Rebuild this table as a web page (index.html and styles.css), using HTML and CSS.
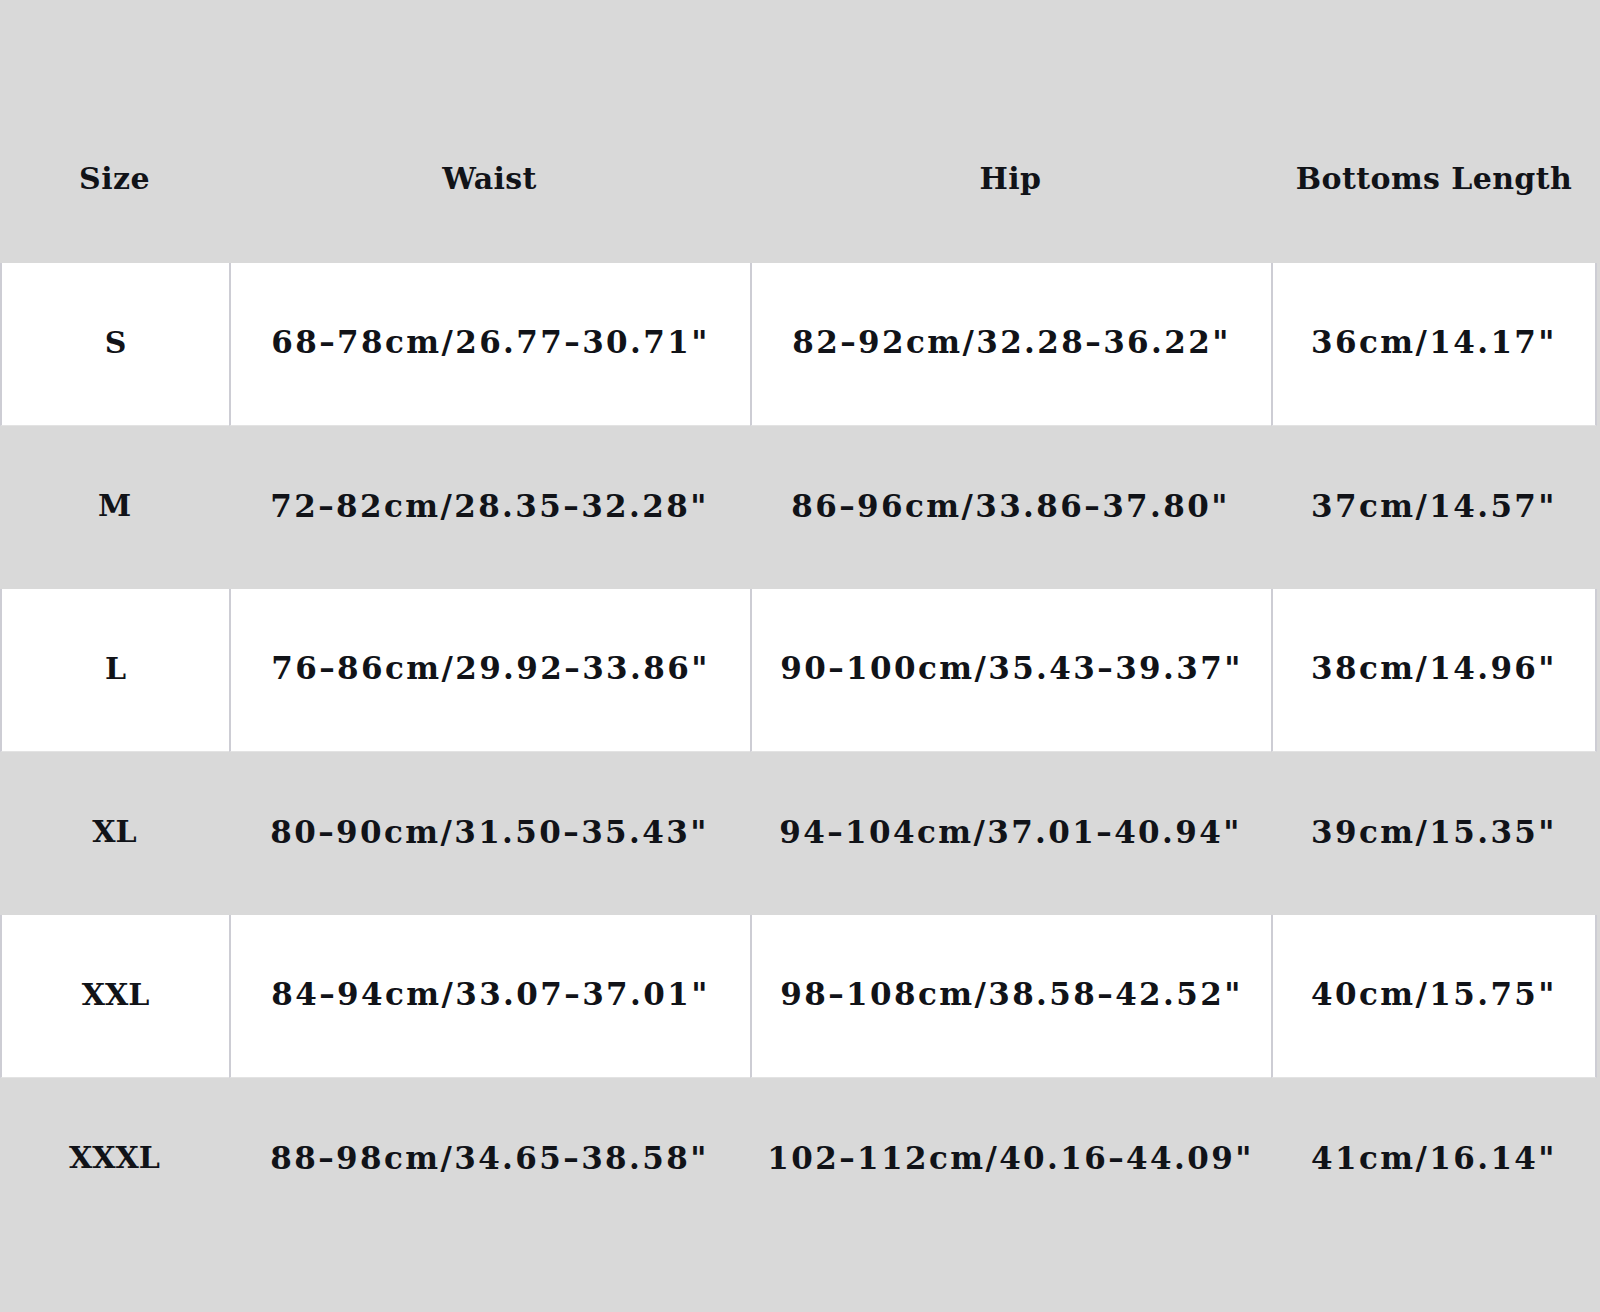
FILE: index.html
```html
<!DOCTYPE html>
<html lang="en">
<head>
<meta charset="utf-8">
<title>Size Chart</title>
<link rel="stylesheet" href="styles.css">
</head>
<body>
<div class="chart">
  <div class="row head">
    <div class="cell">Size</div>
    <div class="cell">Waist</div>
    <div class="cell">Hip</div>
    <div class="cell">Bottoms Length</div>
  </div>
  <div class="row light">
    <div class="cell size">S</div>
    <div class="cell">68–78cm/26.77–30.71"</div>
    <div class="cell">82–92cm/32.28–36.22"</div>
    <div class="cell">36cm/14.17"</div>
  </div>
  <div class="row dark">
    <div class="cell size">M</div>
    <div class="cell">72–82cm/28.35–32.28"</div>
    <div class="cell">86–96cm/33.86–37.80"</div>
    <div class="cell">37cm/14.57"</div>
  </div>
  <div class="row light">
    <div class="cell size">L</div>
    <div class="cell">76–86cm/29.92–33.86"</div>
    <div class="cell">90–100cm/35.43–39.37"</div>
    <div class="cell">38cm/14.96"</div>
  </div>
  <div class="row dark">
    <div class="cell size">XL</div>
    <div class="cell">80–90cm/31.50–35.43"</div>
    <div class="cell">94–104cm/37.01–40.94"</div>
    <div class="cell">39cm/15.35"</div>
  </div>
  <div class="row light">
    <div class="cell size">XXL</div>
    <div class="cell">84–94cm/33.07–37.01"</div>
    <div class="cell">98–108cm/38.58–42.52"</div>
    <div class="cell">40cm/15.75"</div>
  </div>
  <div class="row dark">
    <div class="cell size">XXXL</div>
    <div class="cell">88–98cm/34.65–38.58"</div>
    <div class="cell">102–112cm/40.16–44.09"</div>
    <div class="cell">41cm/16.14"</div>
  </div>
</div>
</body>
</html>
```

FILE: styles.css
```css
html, body {
  margin: 0;
  padding: 0;
  background: #d9d9d9;
}

body {
  width: 1600px;
  height: 1312px;
  overflow: hidden;
  font-family: "DejaVu Serif", "Liberation Serif", serif;
  font-weight: bold;
  color: #111318;
}

.chart {
  display: flex;
  flex-direction: column;
  width: 1600px;
}

.row {
  display: grid;
  grid-template-columns: 229px 521px 521px 326px;
  height: 163px;
}

.row.head {
  height: 263px;
  align-items: end;
  padding-bottom: 64px;
  box-sizing: border-box;
}

.cell {
  display: flex;
  align-items: center;
  justify-content: center;
  padding-bottom: 4px;
  box-sizing: border-box;
  font-size: 31px;
  letter-spacing: 2.4px;
  white-space: nowrap;
}

.head .cell {
  display: block;
  text-align: center;
  padding-bottom: 0;
  font-size: 30px;
  line-height: 40px;
  letter-spacing: 0.4px;
}

.cell.size {
  font-size: 30px;
  letter-spacing: 0;
}

.row.light .cell {
  background: #ffffff;
  border-left: 2px solid #cdcdd4;
  border-bottom: 1px solid #e3e3e3;
}

.row.light .cell:last-child {
  border-right: 2px solid #cdcdd4;
}

.row.dark .cell {
  background: #d9d9d9;
}
```
